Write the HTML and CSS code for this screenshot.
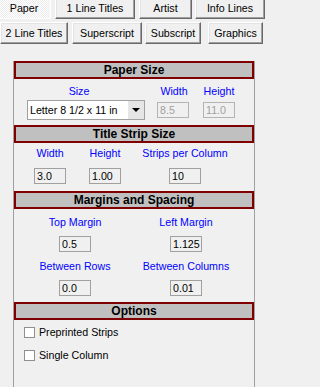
FILE: index.html
```html
<!DOCTYPE html>
<html>
<head>
<meta charset="utf-8">
<link rel="stylesheet" href="styles.css">
</head>
<body>
<div class="tabs">
  <div class="tab-row row1">
    <div class="tab tab-on w-paper">Paper</div>
    <div class="tab w-1lt">1 Line Titles</div>
    <div class="tab w-artist">Artist</div>
    <div class="tab w-info">Info Lines</div>
  </div>
  <div class="tab-row row2">
    <div class="tab w-2lt">2 Line Titles</div>
    <div class="tab w-sup">Superscript</div>
    <div class="tab w-sub">Subscript</div>
    <div class="tab w-gfx">Graphics</div>
  </div>
</div>

<div class="panel">
  <div class="head">Paper Size</div>
  <div class="sec-paper">
    <div class="lbl lbl-size">Size</div>
    <div class="lbl">Width</div>
    <div class="lbl">Height</div>
    <div class="combo"><span class="combo-text">Letter 8 1/2 x 11 in</span><span class="combo-btn"><span class="arrow"></span></span></div>
    <div class="field off f-width">8.5</div>
    <div class="field off">11.0</div>
  </div>

  <div class="head">Title Strip Size</div>
  <div class="sec-strip">
    <div class="lbl">Width</div>
    <div class="lbl">Height</div>
    <div class="lbl">Strips per Column</div>
    <div class="field">3.0</div>
    <div class="field">1.00</div>
    <div class="field">10</div>
  </div>

  <div class="head">Margins and Spacing</div>
  <div class="sec-margins">
    <div class="mcol">
      <div class="lbl">Top Margin</div>
      <div class="field m-in">0.5</div>
      <div class="lbl m-lbl2">Between Rows</div>
      <div class="field m-in">0.0</div>
    </div>
    <div class="mcol">
      <div class="lbl">Left Margin</div>
      <div class="field m-in">1.125</div>
      <div class="lbl m-lbl2">Between Columns</div>
      <div class="field m-in">0.01</div>
    </div>
  </div>

  <div class="head">Options</div>
  <div class="sec-options">
    <div class="check"><span class="box"></span><span>Preprinted Strips</span></div>
    <div class="check check2"><span class="box"></span><span>Single Column</span></div>
  </div>
</div>
</body>
</html>
```
FILE: styles.css
```css
html, body {
  margin: 0;
  padding: 0;
  background: #f0f0f0;
  overflow: hidden;
}
body {
  font-family: "Liberation Sans", Arial, sans-serif;
  font-size: 10.67px;
  line-height: 13px;
  color: #000;
}

/* tab buttons */
.tabs {
  margin-top: -3px;
  display: flex;
  flex-direction: column;
  gap: 3px;
}
.tab-row {
  display: flex;
}
.tab {
  box-sizing: border-box;
  height: 22px;
  display: flex;
  align-items: center;
  justify-content: center;
  flex: none;
  white-space: nowrap;
  background: #f0f0f0;
  border: 1px solid;
  border-color: #ffffff #696969 #696969 #ffffff;
  box-shadow: inset -1px -1px #a0a0a0, inset 1px 1px #e3e3e3;
}
.tab-on {
  border-color: #696969 #ffffff #ffffff #696969;
  box-shadow: inset 1px 1px #a0a0a0;
  background-color: #f8f8f8;
  background-image: repeating-conic-gradient(#ffffff 0 25%, #ececec 0 50%);
  background-size: 2px 2px;
}
.w-paper { width: 54px; margin-left: -3px; }
.w-1lt { width: 80px; margin-left: 4px; }
.w-artist { width: 53px; margin-left: 4px; }
.w-info { width: 70px; margin-left: 3px; }
.w-2lt { width: 68px; }
.w-sup { width: 70px; margin-left: 4px; }
.w-sub { width: 56px; margin-left: 3px; }
.w-gfx { width: 55px; margin-left: 7px; }

/* panel */
.panel {
  margin-top: 17px;
  margin-left: 13px;
  width: 242px;
  box-sizing: border-box;
  border-left: 1px solid #a0a0a0;
  border-right: 1px solid #a0a0a0;
  padding-bottom: 40px;
}
.head {
  box-sizing: border-box;
  height: 18px;
  border: 2px solid #800000;
  background: #c0c0c0;
  font-weight: bold;
  font-size: 12px;
  line-height: 14px;
  text-align: center;
}

.lbl {
  color: #0000ff;
  white-space: nowrap;
  text-align: center;
  height: 13px;
}

.field {
  box-sizing: border-box;
  width: 32px;
  height: 16px;
  border: 1px solid #a0a0a0;
  padding-left: 2px;
  line-height: 14px;
  background: #f0f0f0;
  white-space: nowrap;
  overflow: hidden;
}
.field.off {
  color: #a0a0a0;
  border-color: #b4b4b4;
}

/* paper size */
.sec-paper {
  display: grid;
  grid-template-columns: 118px 58px 32px;
  grid-template-rows: 13px 20px;
  row-gap: 2px;
  padding: 6px 0 5px 13px;
  align-items: center;
}
.lbl-size { padding-right: 14px; }
.f-width { margin-left: 12px; }
.combo {
  box-sizing: border-box;
  width: 118px;
  height: 20px;
  border: 1px solid #a0a0a0;
  background: #fff;
  display: flex;
}
.combo-text {
  flex: 1;
  padding-left: 2px;
  line-height: 18px;
  white-space: nowrap;
}
.combo-btn {
  width: 16px;
  background: #e6e6e6;
  display: flex;
  align-items: center;
  justify-content: center;
}
.arrow {
  width: 0;
  height: 0;
  border-left: 4px solid transparent;
  border-right: 4px solid transparent;
  border-top: 4px solid #000;
}

/* title strip */
.sec-strip {
  display: grid;
  grid-template-columns: 60px 50px 110px;
  grid-template-rows: 13px 16px;
  row-gap: 8px;
  justify-items: center;
  padding: 4px 0 7px 6px;
}

/* margins */
.sec-margins {
  display: grid;
  grid-template-columns: 122px 100px;
  padding: 7px 0 6px 0;
}
.mcol {
  display: flex;
  flex-direction: column;
  align-items: center;
}
.m-in { margin-top: 7px; }
.m-lbl2 { margin-top: 8px; }

/* options */
.sec-options {
  padding: 6px 0 0 10px;
}
.check {
  display: flex;
  align-items: center;
  height: 13px;
}
.check2 { margin-top: 10px; }
.box {
  box-sizing: border-box;
  width: 11px;
  height: 11px;
  border: 1px solid #8f8f8f;
  background: #fff;
  margin-right: 4px;
}
```
